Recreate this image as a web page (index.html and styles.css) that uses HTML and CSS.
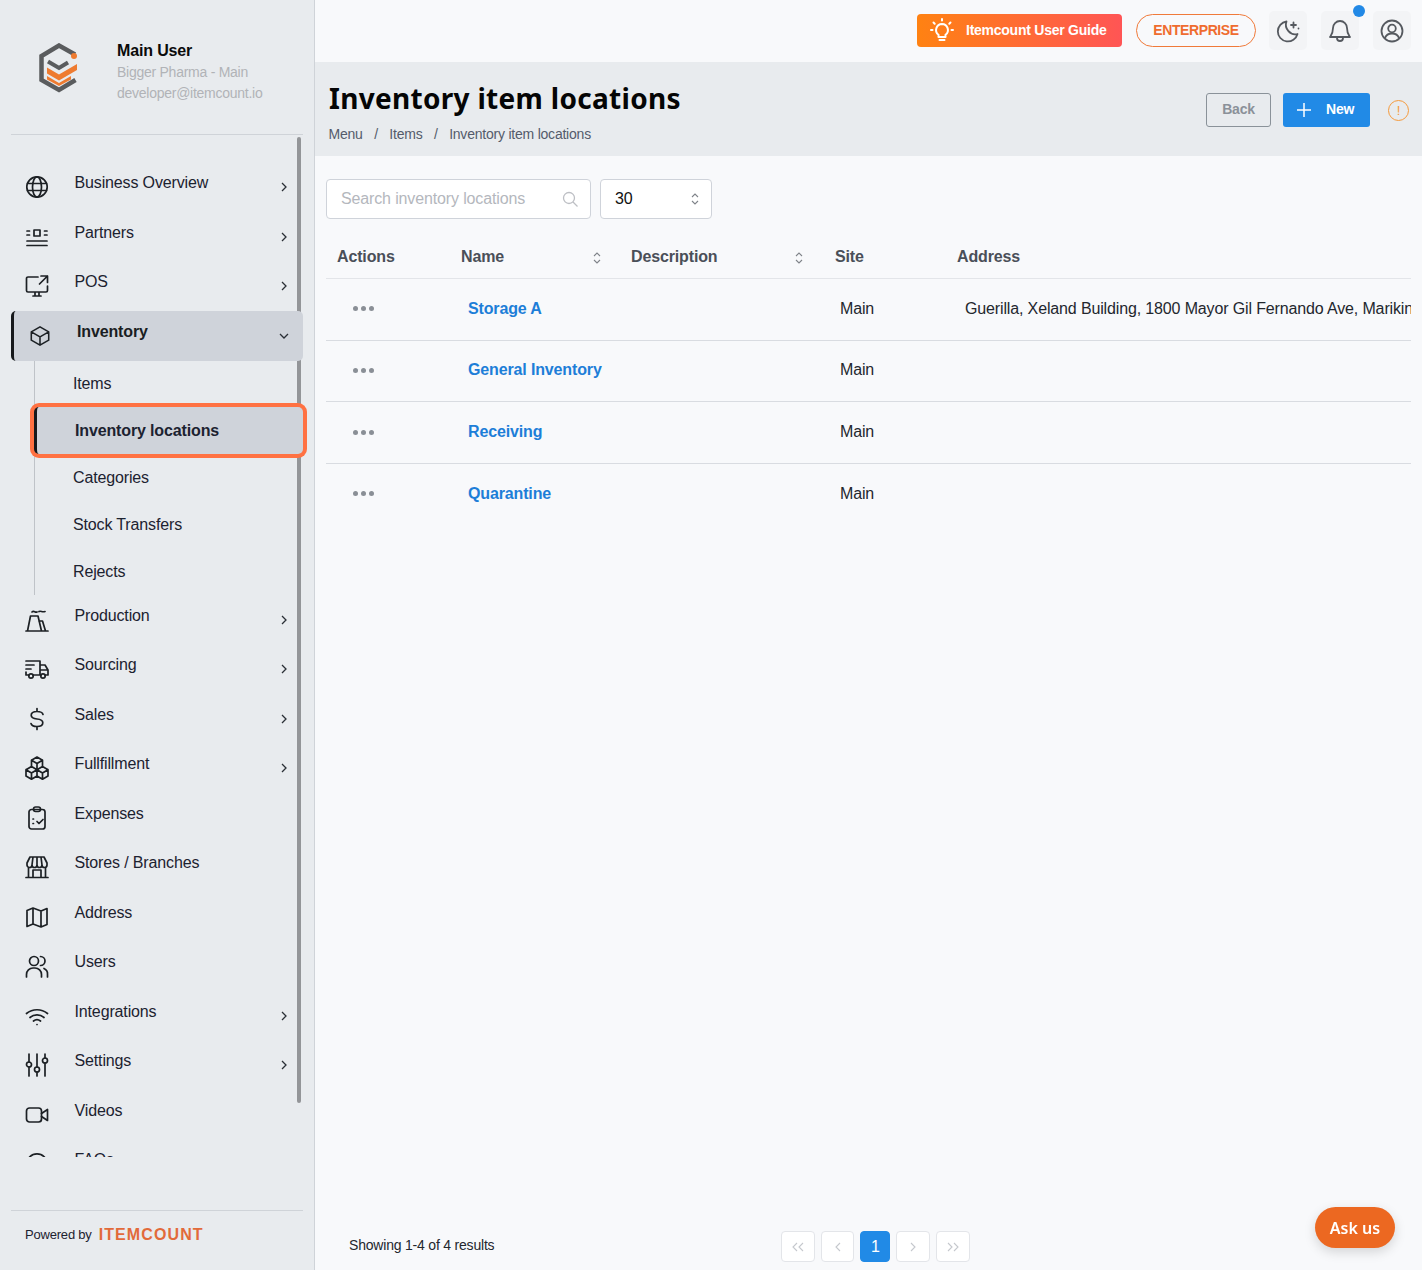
FILE: index.html
```html
<!DOCTYPE html>
<html lang="en">
<head>
  <meta charset="UTF-8">
  <title>Inventory item locations</title>
  <link rel="stylesheet" href="styles.css">
</head>
<body>
  <div class="app">
    <!-- Sidebar -->
    <aside class="sidebar">
      <div class="scroll-thumb"></div>
      <div class="profile">
        <svg class="logo" width="40" height="50" viewBox="0 0 40 50">
          <path d="M36 11.500 20 2.500 2.500 13v24L20 47l16.500-10" fill="none" stroke="#5a5c5e" stroke-width="4.500"/>
          <path d="M9 18.500 20 25l9-5.500" fill="none" stroke="#5a5c5e" stroke-width="4"/>
          <path d="M8 24.500 20 31.500 38 21v6L20 37.500 8 30.500z" fill="#ee7b30"/>
          <path d="M8 33 20 40 32 33v3.500L20 43 8 36.500z" fill="#ee7b30"/>
          <circle cx="35" cy="13" r="3" fill="#ee7b30"/>
        </svg>
        <div class="profile-text">
          <div class="profile-name">Main User</div>
          <div class="profile-sub">Bigger Pharma - Main</div>
          <div class="profile-sub">developer@itemcount.io</div>
        </div>
      </div>

      <nav class="menu">
        <div class="menu-row">
          <svg class="menu-icon" viewBox="0 0 24 24"><circle cx="12" cy="12" r="10.200"/><ellipse cx="12" cy="12" rx="4.500" ry="10.200"/><path d="M2.500 8.500h19M2.500 15.500h19"/></svg>
          <span class="menu-label">Business Overview</span>
          <svg class="chevron" viewBox="0 0 10 10"><path d="M3 1l4 4-4 4"/></svg>
        </div>
        <div class="menu-row">
          <svg class="menu-icon" viewBox="0 0 24 24"><rect x="9" y="5" width="6" height="6"/><path d="M2 16h20M2 20.500h20M2 6h2.500M2 10h2.500M19.500 6H22M19.500 10H22"/></svg>
          <span class="menu-label">Partners</span>
          <svg class="chevron" viewBox="0 0 10 10"><path d="M3 1l4 4-4 4"/></svg>
        </div>
        <div class="menu-row">
          <svg class="menu-icon" viewBox="0 0 24 24"><path d="M13 3H3a1.500 1.500 0 0 0-1.500 1.500v12A1.500 1.500 0 0 0 3 18h18a1.500 1.500 0 0 0 1.500-1.500V12M8 22h8M10 18v4M14 18v4M16 2h6.500v6.500M22.500 2l-8 8"/></svg>
          <span class="menu-label">POS</span>
          <svg class="chevron" viewBox="0 0 10 10"><path d="M3 1l4 4-4 4"/></svg>
        </div>

        <div class="menu-row menu-row-open">
          <svg class="menu-icon" viewBox="0 0 24 24"><path d="M12 2l9.500 5.500v9L12 22l-9.500-5.500v-9zM2.500 7.500 12 13l9.500-5.500M12 13v9"/></svg>
          <span class="menu-label">Inventory</span>
          <svg class="chevron" viewBox="0 0 10 10"><path d="M1 3l4 4 4-4"/></svg>
        </div>
        <div class="submenu">
          <div class="submenu-item">Items</div>
          <div class="submenu-item submenu-item-active">Inventory locations</div>
          <div class="submenu-item">Categories</div>
          <div class="submenu-item">Stock Transfers</div>
          <div class="submenu-item">Rejects</div>
        </div>

        <div class="menu-row">
          <svg class="menu-icon" viewBox="0 0 24 24"><path d="M1 23h22M5.500 8 2.500 23M13 8l3.500 15M5.500 8H13M14 13h3.500l3 10M7 4c2-2 3 1 5 0M14 3.500c2-1 3 1 6 0"/></svg>
          <span class="menu-label">Production</span>
          <svg class="chevron" viewBox="0 0 10 10"><path d="M3 1l4 4-4 4"/></svg>
        </div>
        <div class="menu-row">
          <svg class="menu-icon" viewBox="0 0 24 24"><path d="M1 4h14v14H8M4 18H1v-3M1 8h8M1 12h5M15 8h5l3 5v5h-3M15 18h1M15 13h8"/><circle cx="6" cy="19" r="2.200"/><circle cx="18" cy="19" r="2.200"/></svg>
          <span class="menu-label">Sourcing</span>
          <svg class="chevron" viewBox="0 0 10 10"><path d="M3 1l4 4-4 4"/></svg>
        </div>
        <div class="menu-row">
          <svg class="menu-icon" viewBox="0 0 24 24"><path d="M12 1.500v3M12 19.500v3M18 7.500C17.500 5.500 15 4.500 12 4.500c-3.500 0-5.800 1.500-5.800 3.800s2.400 3.400 5.800 3.700 5.800 1.500 5.800 3.800-2.300 3.700-5.800 3.700c-3 0-5.500-1-6-3"/></svg>
          <span class="menu-label">Sales</span>
          <svg class="chevron" viewBox="0 0 10 10"><path d="M3 1l4 4-4 4"/></svg>
        </div>
        <div class="menu-row">
          <svg class="menu-icon" viewBox="0 0 24 24"><path d="M12 1l5.500 3.200v6.300L12 13.700l-5.500-3.200V4.200zM6.500 4.200 12 7.500l5.500-3.300M12 7.500v6.200M6.500 10.500l5.500 3.200V20l-5.500 3.200L1 20v-6.300zM1 13.700l5.500 3.300 5.500-3.300M6.500 17v6.200M17.500 10.500l5.500 3.200V20l-5.500 3.200L12 20M12 13.700l5.500 3.300 5.500-3.300M17.500 17v6.200"/></svg>
          <span class="menu-label">Fullfillment</span>
          <svg class="chevron" viewBox="0 0 10 10"><path d="M3 1l4 4-4 4"/></svg>
        </div>
        <div class="menu-row">
          <svg class="menu-icon" viewBox="0 0 24 24"><rect x="4" y="3.500" width="16" height="19.500" rx="2.500"/><rect x="8.500" y="1" width="7" height="4.500" rx="2.200"/><path d="M8 13h.5M8 17.500h.5M12 15.500l2 2 4-4"/></svg>
          <span class="menu-label">Expenses</span>
        </div>
        <div class="menu-row">
          <svg class="menu-icon" viewBox="0 0 24 24"><path d="M5 2h14l3 6v2a2.500 2.500 0 0 1-5 0 2.500 2.500 0 0 1-5 0 2.500 2.500 0 0 1-5 0 2.500 2.500 0 0 1-5 0V8zM7 10l1-8M17 10l-1-8M12 2v8M3.500 12.500V22M20.500 12.500V22M1 22.500h22M8 22v-7h8v7"/></svg>
          <span class="menu-label">Stores / Branches</span>
        </div>
        <div class="menu-row">
          <svg class="menu-icon" viewBox="0 0 24 24"><path d="M8 3 2 5.500v16L8 19l8 3 6-2.500v-16L16 6zM8 3v16M16 6v16"/></svg>
          <span class="menu-label">Address</span>
        </div>
        <div class="menu-row">
          <svg class="menu-icon" viewBox="0 0 24 24"><circle cx="9" cy="7" r="4.500"/><path d="M1.500 23v-2.500A6.500 6.500 0 0 1 8 14h2a6.500 6.500 0 0 1 6.500 6.500V23M15.500 2.500a4.500 4.500 0 0 1 0 9M19 14.500a6 6 0 0 1 3.500 6V23"/></svg>
          <span class="menu-label">Users</span>
        </div>
        <div class="menu-row">
          <svg class="menu-icon" viewBox="0 0 24 24"><path d="M1.500 9.500c6-5 15-5 21 0M5 13.500c4-3.500 10-3.500 14 0M8.500 17c2-1.500 5-1.500 7 0M12 20.500h.01"/></svg>
          <span class="menu-label">Integrations</span>
          <svg class="chevron" viewBox="0 0 10 10"><path d="M3 1l4 4-4 4"/></svg>
        </div>
        <div class="menu-row">
          <svg class="menu-icon" viewBox="0 0 24 24"><path d="M4 1v8M4 14v9M12 1v13M12 19v4M20 5v-4M20 10v13"/><circle cx="4" cy="11.500" r="2.500"/><circle cx="12" cy="16.500" r="2.500"/><circle cx="20" cy="7.500" r="2.500"/></svg>
          <span class="menu-label">Settings</span>
          <svg class="chevron" viewBox="0 0 10 10"><path d="M3 1l4 4-4 4"/></svg>
        </div>
        <div class="menu-row">
          <svg class="menu-icon" viewBox="0 0 24 24"><rect x="1.500" y="5" width="15" height="14" rx="3"/><path d="M16.500 10.500l6-4v11l-6-4"/></svg>
          <span class="menu-label">Videos</span>
        </div>
        <div class="menu-row">
          <svg class="menu-icon" viewBox="0 0 24 24"><circle cx="12" cy="12" r="10.200"/><path d="M9 9a3 3 0 0 1 6 0c0 2-3 2.500-3 5M12 18h.01"/></svg>
          <span class="menu-label">FAQs</span>
        </div>
      </nav>

      <div class="sidebar-footer">
        <span class="powered">Powered by</span>
        <span class="brand">ITEMCOUNT</span>
      </div>
    </aside>

    <!-- Main -->
    <main class="main">
      <header class="topbar">
        <a class="guide-button">
          <svg class="guide-icon" viewBox="0 0 24 24"><path d="M12 6a6 6 0 0 0-3.500 10.800V19h7v-2.200A6 6 0 0 0 12 6zM9.500 22h5M12 1v1.500M3.500 4.500l1.200 1.200M20.500 4.500l-1.200 1.200M1 12h1.500M21.500 12H23"/></svg>
          Itemcount User Guide
        </a>
        <a class="plan-button">ENTERPRISE</a>
        <div class="icon-box">
          <svg class="top-icon" viewBox="0 0 24 24"><path d="M21.500 15A10 10 0 1 1 10.500 2.500C8 9 14 17 21.500 15zM17.500 3.500v5M15 6h5M22.500 9.500h.01"/></svg>
        </div>
        <div class="icon-box icon-box-dot">
          <svg class="top-icon" viewBox="0 0 24 24"><path d="M12 2a7 7 0 0 0-7 7c0 5.500-2 7.500-3 9h20c-1-1.500-3-3.500-3-9a7 7 0 0 0-7-7zM9 18v1a3 3 0 0 0 6 0v-1"/></svg>
        </div>
        <div class="icon-box">
          <svg class="top-icon" viewBox="0 0 24 24"><circle cx="12" cy="12" r="10.500"/><circle cx="12" cy="9.500" r="3.800"/><path d="M5 19c1-3 4-4.500 7-4.500s6 1.500 7 4.500"/></svg>
        </div>
      </header>

      <section class="page-head">
        <div>
          <h1 class="page-title">Inventory item locations</h1>
          <div class="breadcrumb">
            <span>Menu</span><span class="crumb-sep">/</span><span>Items</span><span class="crumb-sep">/</span><span>Inventory item locations</span>
          </div>
        </div>
        <div class="page-actions">
          <button class="btn-back">Back</button>
          <button class="btn-new">
            <svg class="plus-icon" viewBox="0 0 14 14"><path d="M7 0v14M0 7h14"/></svg>
            New
          </button>
          <span class="info-icon">!</span>
        </div>
      </section>

      <section class="content">
        <div class="filters">
          <div class="search-box">
            <span class="search-placeholder">Search inventory locations</span>
            <svg class="search-icon" viewBox="0 0 16 16"><circle cx="7" cy="7" r="5.500"/><path d="M11 11l4.500 4.500"/></svg>
          </div>
          <div class="page-size">
            <span>30</span>
            <svg class="sort-icon" viewBox="0 0 8 14"><path d="M1 5l3-3 3 3M1 9l3 3 3-3"/></svg>
          </div>
        </div>

        <table class="locations">
          <thead>
            <tr>
              <th class="col-actions">Actions</th>
              <th class="col-name"><div class="th-sort">Name<svg class="sort-icon" viewBox="0 0 8 14"><path d="M1 5l3-3 3 3M1 9l3 3 3-3"/></svg></div></th>
              <th class="col-desc"><div class="th-sort">Description<svg class="sort-icon" viewBox="0 0 8 14"><path d="M1 5l3-3 3 3M1 9l3 3 3-3"/></svg></div></th>
              <th class="col-site">Site</th>
              <th class="col-address">Address</th>
            </tr>
          </thead>
          <tbody>
            <tr>
              <td><span class="dots"><i></i><i></i><i></i></span></td>
              <td><a class="name-link">Storage A</a></td>
              <td></td>
              <td>Main</td>
              <td class="cell-address">Guerilla, Xeland Building, 1800 Mayor Gil Fernando Ave, Marikina</td>
            </tr>
            <tr>
              <td><span class="dots"><i></i><i></i><i></i></span></td>
              <td><a class="name-link">General Inventory</a></td>
              <td></td>
              <td>Main</td>
              <td></td>
            </tr>
            <tr>
              <td><span class="dots"><i></i><i></i><i></i></span></td>
              <td><a class="name-link">Receiving</a></td>
              <td></td>
              <td>Main</td>
              <td></td>
            </tr>
            <tr>
              <td><span class="dots"><i></i><i></i><i></i></span></td>
              <td><a class="name-link">Quarantine</a></td>
              <td></td>
              <td>Main</td>
              <td></td>
            </tr>
          </tbody>
        </table>

        <div class="table-footer">
          <div class="results">Showing 1-4 of 4 results</div>
          <div class="pager">
            <span class="pager-btn"><svg viewBox="0 0 14 10"><path d="M6 1 2 5l4 4M12 1 8 5l4 4"/></svg></span>
            <span class="pager-btn"><svg viewBox="0 0 14 10"><path d="M9 1 5 5l4 4"/></svg></span>
            <span class="pager-btn pager-current">1</span>
            <span class="pager-btn"><svg viewBox="0 0 14 10"><path d="M5 1l4 4-4 4"/></svg></span>
            <span class="pager-btn"><svg viewBox="0 0 14 10"><path d="M2 1l4 4-4 4M8 1l4 4-4 4"/></svg></span>
          </div>
        </div>
      </section>
    </main>
  </div>

  <button class="ask-us">Ask us</button>
</body>
</html>
```

FILE: styles.css
```css
html, body {
  margin: 0;
  padding: 0;
  height: 100%;
  background-color: #f8f9fb;
  font-family: 'Liberation Sans', Arial, sans-serif;
  font-size: 16px;
  letter-spacing: -0.14px;
  color: #1c2230;
  overflow: hidden;
}

.app {
  display: flex;
  height: 1270px;
}

/* Sidebar */
.sidebar {
  position: relative;
  flex: 0 0 314px;
  display: flex;
  flex-direction: column;
  background-color: #e8ebee;
  border-right: 1px solid #cfd3d8;
}

.scroll-thumb {
  position: absolute;
  left: 297px;
  top: 137px;
  width: 4px;
  height: 966px;
  border-radius: 2px;
  background-color: #939598;
}

.profile {
  flex: 0 0 135px;
  box-sizing: border-box;
  display: flex;
  margin: 0 11px;
  padding: 41px 0 0 28px;
  gap: 38px;
  border-bottom: 1px solid #cfd3d8;
}

.logo {
  margin-top: 2px;
}

.profile-name {
  font-size: 16px;
  font-weight: bold;
  color: #0a0a0a;
  line-height: 20px;
  margin-bottom: 1px;
}

.profile-sub {
  font-size: 14px;
  letter-spacing: -0.26px;
  color: #b1b3b7;
  line-height: 21px;
}

.menu {
  flex: 1;
  padding-top: 27.5px;
  overflow: hidden;
}

.menu-row {
  position: relative;
  box-sizing: border-box;
  display: flex;
  align-items: center;
  height: 49.5px;
  margin: 0 11px;
  padding-left: 14px;
}

.menu-icon {
  width: 24px;
  height: 24px;
  flex: none;
  fill: none;
  stroke: #1c2024;
  stroke-width: 1.700;
  stroke-linecap: round;
  stroke-linejoin: round;
}

.menu-label {
  margin-left: 25.5px;
  position: relative;
  top: -4px;
  flex: 1;
  white-space: nowrap;
}

.chevron {
  width: 10px;
  height: 10px;
  flex: none;
  margin-right: 14px;
  fill: none;
  stroke: #2a2f36;
  stroke-width: 1.300;
}

.menu-row-open {
  padding-left: 15px;
  background-color: #cfd3da;
  border-left: 3px solid #17191c;
  border-radius: 5px;
}

.menu-row-open .menu-label {
  margin-left: 26px;
  font-weight: bold;
  color: #1a1d22;
}

.menu-row-open .menu-icon {
  width: 22px;
  height: 22px;
}

.submenu {
  margin: -1px 11px 0 34px;
  border-left: 1px solid #bfc3c8;
  height: 235.5px;
}

.submenu-item {
  position: relative;
  height: 47px;
  line-height: 47px;
  padding-left: 38px;
}

.submenu-item-active {
  background-color: #cfd3da;
  border-left: 3px solid #17191c;
  margin-left: -1px;
  font-weight: bold;
  border-radius: 5px;
  box-shadow: 0 0 0 4px #ff7142;
}

.sidebar-footer {
  box-sizing: border-box;
  display: flex;
  align-items: center;
  height: 60px;
  margin: 53px 11px 0;
  padding: 0 0 12px 14px;
  border-top: 1px solid #cfd3d8;
}

.powered {
  font-size: 13px;
  letter-spacing: -0.2px;
  color: #1c2230;
}

.brand {
  margin-left: 7px;
  font-size: 16px;
  font-weight: bold;
  letter-spacing: 1.100px;
  color: #e26a3a;
}

/* Main */
.main {
  flex: 1;
  min-width: 0;
  display: flex;
  flex-direction: column;
}

.topbar {
  display: flex;
  align-items: center;
  justify-content: flex-end;
  height: 62px;
  padding: 0 11px 1px 0;
  box-sizing: border-box;
  gap: 14px;
}

.guide-button {
  box-sizing: border-box;
  display: flex;
  align-items: center;
  width: 205px;
  height: 33px;
  padding: 0 0 1px 13px;
  gap: 12px;
  border-radius: 4px;
  background: linear-gradient(90deg, #ff8212, #ff5555);
  color: #fff;
  font-size: 14px;
  letter-spacing: -0.25px;
  font-weight: bold;
}

.guide-icon {
  width: 24px;
  height: 24px;
  fill: none;
  stroke: #fff;
  stroke-width: 2;
  stroke-linecap: round;
  stroke-linejoin: round;
}

.plan-button {
  box-sizing: border-box;
  width: 120px;
  height: 33px;
  line-height: 31px;
  text-align: center;
  border: 1px solid #f07a3a;
  border-radius: 17px;
  margin-right: -1px;
  color: #ef6c2f;
  font-size: 14px;
  letter-spacing: -0.4px;
  font-weight: bold;
}

.icon-box {
  position: relative;
  width: 38px;
  height: 39px;
  display: flex;
  align-items: center;
  justify-content: center;
  background-color: #f3f4f6;
  border-radius: 5px;
}

.icon-box-dot::after {
  content: "";
  position: absolute;
  right: -6px;
  top: -6px;
  width: 12px;
  height: 12px;
  border-radius: 50%;
  background-color: #2289e6;
}

.top-icon {
  width: 24px;
  height: 24px;
  fill: none;
  stroke: #55595f;
  stroke-width: 1.800;
  stroke-linecap: round;
  stroke-linejoin: round;
}

.page-head {
  display: flex;
  justify-content: space-between;
  height: 94px;
  box-sizing: border-box;
  padding: 16px 13px 0 14px;
  background-color: #e8ebee;
}

.page-title {
  margin: 0;
  font-family: 'Noto Sans', sans-serif;
  font-size: 28px;
  line-height: 41px;
  font-weight: bold;
  letter-spacing: 0.3px;
  color: #050505;
}

.breadcrumb {
  margin: 6px 0 0 -0.5px;
  font-size: 14px;
  letter-spacing: -0.22px;
  line-height: 18px;
  color: #545b6b;
}

.crumb-sep {
  margin: 0 11.500px;
}

.page-actions {
  display: flex;
  align-items: center;
  height: 34px;
  margin-top: 15px;
}

.btn-back {
  width: 65px;
  height: 34px;
  padding: 0 0 2px;
  background: transparent;
  border: 1px solid #8a9299;
  border-radius: 3px;
  font-family: inherit;
  font-size: 14px;
  letter-spacing: -0.2px;
  font-weight: bold;
  color: #8b9199;
}

.btn-new {
  display: flex;
  align-items: center;
  width: 87px;
  height: 34px;
  margin-left: 12px;
  padding: 0 0 2px 14px;
  gap: 15px;
  background-color: #218ae6;
  border: none;
  border-radius: 3px;
  font-family: inherit;
  font-size: 14px;
  letter-spacing: -0.2px;
  font-weight: bold;
  color: #fff;
}

.plus-icon {
  width: 14px;
  height: 14px;
  margin-top: 2px;
  fill: none;
  stroke: #fff;
  stroke-width: 1.500;
}

.info-icon {
  width: 19px;
  height: 19px;
  margin-left: 18px;
  border: 1px solid #f59a3c;
  border-radius: 50%;
  text-align: center;
  font-size: 13px;
  line-height: 19px;
  color: #f59a3c;
}

.content {
  flex: 1;
  display: flex;
  flex-direction: column;
  padding: 23px 11px 8px 11px;
  min-height: 0;
}

.filters {
  display: flex;
  gap: 9px;
}

.search-box,
.page-size {
  box-sizing: border-box;
  display: flex;
  align-items: center;
  justify-content: space-between;
  height: 40px;
  background-color: #fff;
  border: 1px solid #cfd3da;
  border-radius: 4px;
}

.search-box {
  width: 265px;
  padding: 0 12px 0 14px;
  color: #b4b7bd;
}

.search-icon {
  width: 16px;
  height: 16px;
  fill: none;
  stroke: #bdbfc4;
  stroke-width: 1.300;
}

.page-size {
  width: 112px;
  padding: 0 12px 0 14px;
  color: #111;
}

.sort-icon {
  width: 8px;
  height: 14px;
  flex: none;
  fill: none;
  stroke: #7f8389;
  stroke-width: 1.100;
}

.locations {
  width: 1085px;
  margin-top: 18px;
  table-layout: fixed;
  border-collapse: collapse;
}

.locations th {
  height: 40px;
  padding: 0 0 1px 11px;
  text-align: left;
  font-weight: bold;
  color: #4a4f58;
  border-bottom: 1px solid #e3e5e9;
}

.col-actions { width: 113px; }
.col-name { width: 159px; }
.col-desc { width: 193px; }
.col-site { width: 111px; }

.th-sort {
  display: flex;
  align-items: center;
  justify-content: space-between;
  padding-right: 20px;
}

.col-desc .th-sort {
  padding-right: 22px;
}

.th-sort .sort-icon {
  position: relative;
  top: 1px;
  margin-right: -1px;
}

.locations td {
  height: 59.67px;
  padding: 0 0 1px 17px;
  white-space: nowrap;
  overflow: hidden;
  color: #23272e;
  border-bottom: 1px solid #d9dce1;
}

.locations tbody tr:last-child td {
  border-bottom: none;
}

.locations td:nth-child(2) {
  padding-left: 18px;
}

.locations td:nth-child(4) {
  padding-left: 16px;
}

.locations td:nth-child(5) {
  padding-left: 19px;
}

.dots {
  display: flex;
  gap: 3px;
  padding-left: 10px;
}

.dots i {
  width: 5px;
  height: 5px;
  border-radius: 50%;
  background-color: #8a8f96;
}

.name-link {
  font-weight: bold;
  color: #1d7ed8;
}

.table-footer {
  position: relative;
  margin-top: auto;
  display: flex;
  align-items: center;
  height: 31px;
  padding-left: 23px;
}

.results {
  padding-bottom: 3px;
  font-size: 14px;
  letter-spacing: -0.2px;
  color: #23272e;
}

.pager {
  position: absolute;
  left: 455px;
  top: 0;
  display: flex;
  gap: 6px;
}

.pager-btn {
  box-sizing: border-box;
  display: flex;
  align-items: center;
  justify-content: center;
  width: 33.7px;
  height: 31px;
  background-color: #fff;
  border: 1px solid #e3e5e9;
  border-radius: 4px;
}

.pager-btn svg {
  width: 14px;
  height: 10px;
  fill: none;
  stroke: #c5c8cd;
  stroke-width: 1.100;
}

.pager-current {
  width: 30px;
  background-color: #218ae6;
  border-color: #218ae6;
  color: #fff;
}

/* Chat button */
.ask-us {
  position: fixed;
  left: 1315px;
  top: 1207px;
  width: 80px;
  height: 41px;
  border: none;
  border-radius: 21px;
  background-color: #ec6821;
  color: #fff;
  font-family: 'Noto Sans', sans-serif;
  font-size: 16px;
  font-weight: 600;
  box-shadow: 0 4px 12px rgba(0, 0, 0, 0.15);
}
```
